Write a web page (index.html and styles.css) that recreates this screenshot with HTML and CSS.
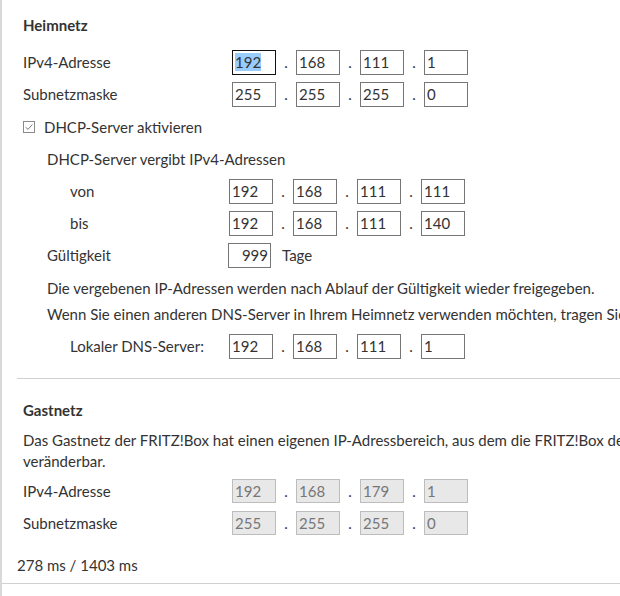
FILE: index.html
```html
<!DOCTYPE html>
<html lang="de">
<head>
<meta charset="utf-8">
<title>Heimnetz</title>
<link rel="stylesheet" href="styles.css">
</head>
<body>
<div class="page">
  <div class="content">
    <section class="sec">
      <h2 class="title t-heim">Heimnetz</h2>
      <div class="row">
        <span class="label lbl-top">IPv4-Adresse</span>
        <span class="ip">
          <span class="field focus"><span class="sel">192</span></span><span class="dot">.</span>
          <span class="field">168</span><span class="dot">.</span>
          <span class="field">111</span><span class="dot">.</span>
          <span class="field">1</span>
        </span>
      </div>
      <div class="row">
        <span class="label lbl-top">Subnetzmaske</span>
        <span class="ip">
          <span class="field">255</span><span class="dot">.</span>
          <span class="field">255</span><span class="dot">.</span>
          <span class="field">255</span><span class="dot">.</span>
          <span class="field">0</span>
        </span>
      </div>
      <div class="row row-cb">
        <svg class="cb" width="12" height="12" viewBox="0 0 12 12" aria-hidden="true">
          <rect x="0.5" y="0.5" width="11" height="11" fill="#fff" stroke="#8a8a8a"/>
          <path d="M2.6 6.2 L5 8.4 L9.4 3.4" fill="none" stroke="#7a7a7a" stroke-width="1"/>
        </svg>
        <span>DHCP-Server aktivieren</span>
      </div>
      <div class="dhcp">
        <div class="row">DHCP-Server vergibt IPv4-Adressen</div>
        <div class="row">
          <span class="label lbl-sub">von</span>
          <span class="ip">
            <span class="field">192</span><span class="dot">.</span>
            <span class="field">168</span><span class="dot">.</span>
            <span class="field">111</span><span class="dot">.</span>
            <span class="field">111</span>
          </span>
        </div>
        <div class="row">
          <span class="label lbl-sub">bis</span>
          <span class="ip">
            <span class="field">192</span><span class="dot">.</span>
            <span class="field">168</span><span class="dot">.</span>
            <span class="field">111</span><span class="dot">.</span>
            <span class="field">140</span>
          </span>
        </div>
        <div class="row">
          <span class="label lbl-gue">Gültigkeit</span>
          <span class="field right">999</span>
          <span class="unit">Tage</span>
        </div>
        <p class="text t-first">Die vergebenen IP-Adressen werden nach Ablauf der Gültigkeit wieder freigegeben.</p>
        <p class="text">Wenn Sie einen anderen DNS-Server in Ihrem Heimnetz verwenden möchten, tragen Sie hier dessen IPv4-Adresse ein.</p>
        <div class="row row-dns">
          <span class="label lbl-sub">Lokaler DNS-Server:</span>
          <span class="ip">
            <span class="field">192</span><span class="dot">.</span>
            <span class="field">168</span><span class="dot">.</span>
            <span class="field">111</span><span class="dot">.</span>
            <span class="field">1</span>
          </span>
        </div>
      </div>
    </section>
    <hr class="sep">
    <section class="sec">
      <h2 class="title t-gast">Gastnetz</h2>
      <p class="para">Das Gastnetz der FRITZ!Box hat einen eigenen IP-Adressbereich, aus dem die FRITZ!Box den Geräten im Gastnetz IP-Adressen zuweist. Dieser IP-Adressbereich ist<br>veränderbar.</p>
      <div class="row row-gast">
        <span class="label lbl-top">IPv4-Adresse</span>
        <span class="ip">
          <span class="field dis">192</span><span class="dot">.</span>
          <span class="field dis">168</span><span class="dot">.</span>
          <span class="field dis">179</span><span class="dot">.</span>
          <span class="field dis">1</span>
        </span>
      </div>
      <div class="row">
        <span class="label lbl-top">Subnetzmaske</span>
        <span class="ip">
          <span class="field dis">255</span><span class="dot">.</span>
          <span class="field dis">255</span><span class="dot">.</span>
          <span class="field dis">255</span><span class="dot">.</span>
          <span class="field dis">0</span>
        </span>
      </div>
    </section>
    <div class="timing">278 ms / 1403 ms</div>
  </div>
  <div class="bottom"></div>
</div>
</body>
</html>
```

FILE: styles.css
```css
html, body {
  margin: 0;
  padding: 0;
  background: #fff;
  overflow: hidden;
}
body {
  width: 620px;
  height: 596px;
}
.page {
  border-left: 2px solid #d8d8d4;
  width: 1400px;
  min-height: 596px;
  font-family: "Lato", "Liberation Sans", sans-serif;
  font-size: 15px;
  color: #333;
  white-space: nowrap;
}
.content {
  padding-left: 15px;
}
.sec {
  padding-left: 6px;
}
.title {
  margin: 0;
  font-size: 15px;
  font-weight: bold;
  height: 20px;
  line-height: 20px;
}
.t-heim { padding-top: 15px; margin-bottom: 11px; }
.t-gast { padding-top: 21px; margin-bottom: 10px; }
.row {
  display: flex;
  align-items: center;
  height: 32px;
}
.row-cb { margin-top: 1px; }
.cb { margin-left: 0; margin-right: 9px; }
.dhcp { padding-left: 24px; }
.label { flex: none; }
.lbl-top { width: 209px; }
.lbl-sub { width: 159px; margin-left: 23px; }
.lbl-gue { width: 181px; }
.ip { display: flex; align-items: center; }
.field {
  box-sizing: border-box;
  width: 44px;
  height: 25px;
  border: 1px solid #767676;
  padding-left: 2px;
  line-height: 23px;
  background: #fff;
  color: #333;
}
.field.focus { border-color: #111; }
.sel { background: #99ccff; }
.field.right { text-align: right; padding: 0 2px 0 0; width: 43px; }
.field.dis {
  background: #e8e8e8;
  border-color: #bdbdbd;
  color: #777;
  height: 24px;
  line-height: 22px;
}
.dot {
  width: 20px;
  text-align: center;
}
.unit { margin-left: 11px; }
.text {
  margin: 0;
  height: 26px;
  line-height: 26px;
}
.t-first { margin-top: 4px; }
.row-dns { margin-top: 3px; }
.sep {
  margin: 16px 0 0 0;
  border: 0;
  border-top: 1px solid #d0d0d0;
  height: 0;
}
.para {
  margin: 0;
  line-height: 21px;
}
.row-gast { margin-top: 3px; }
.timing {
  margin-top: 16px;
  height: 20px;
  line-height: 20px;
}
.bottom {
  margin-top: 8px;
  border-top: 1px solid #d0d0d0;
}
```
